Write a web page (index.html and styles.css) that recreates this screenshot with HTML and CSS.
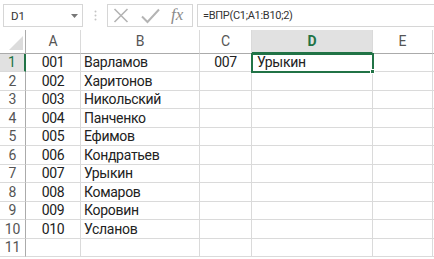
FILE: index.html
```html
<!DOCTYPE html>
<html>
<head>
<meta charset="utf-8">
<link rel="stylesheet" href="styles.css">
</head>
<body>
<div class="app">
  <div class="toolbar">
    <div class="namebox">
      <span class="name">D1</span>
      <svg class="drop" width="7" height="4" viewBox="0 0 7 4"><path d="M0 0H7L3.5 4Z" fill="#777"/></svg>
    </div>
    <div class="sep">
      <svg width="3" height="11" viewBox="0 0 3 11"><circle cx="1.5" cy="1.5" r="1" fill="#c4c4c4"/><circle cx="1.5" cy="5.5" r="1" fill="#c4c4c4"/><circle cx="1.5" cy="9.5" r="1" fill="#c4c4c4"/></svg>
    </div>
    <div class="fxbox">
      <svg class="ico-x" width="16" height="15" viewBox="0 0 16 15"><path d="M1.5 1L14.5 14M14.5 1L1.5 14" stroke="#b4b4b4" stroke-width="1.6" fill="none"/></svg>
      <svg class="ico-ok" width="19" height="16" viewBox="0 0 19 16"><path d="M1 8.5L6.5 14L18 1.5" stroke="#b4b4b4" stroke-width="2" fill="none"/></svg>
      <span class="fx">fx</span>
    </div>
    <div class="formula">=ВПР(С1;А1:В10;2)</div>
  </div>
  <div class="sheet">
    <div class="corner"><svg width="14" height="14" viewBox="0 0 14 14"><path d="M14 0V14H0Z" fill="#dcdcdc"/></svg></div>
    <div class="ch">A</div><div class="ch">B</div><div class="ch">C</div><div class="ch ch-sel">D</div><div class="ch">E</div><div class="ch last"></div>

    <div class="rh rh-sel">1</div><div class="c ca">001</div><div class="c cb">Варламов</div><div class="c ca">007</div><div class="c cb sel">Урыкин<span class="handle"></span></div><div class="c"></div><div class="c last"></div>
    <div class="rh">2</div><div class="c ca">002</div><div class="c cb">Харитонов</div><div class="c"></div><div class="c"></div><div class="c"></div><div class="c last"></div>
    <div class="rh">3</div><div class="c ca">003</div><div class="c cb">Никольский</div><div class="c"></div><div class="c"></div><div class="c"></div><div class="c last"></div>
    <div class="rh">4</div><div class="c ca">004</div><div class="c cb">Панченко</div><div class="c"></div><div class="c"></div><div class="c"></div><div class="c last"></div>
    <div class="rh">5</div><div class="c ca">005</div><div class="c cb">Ефимов</div><div class="c"></div><div class="c"></div><div class="c"></div><div class="c last"></div>
    <div class="rh">6</div><div class="c ca">006</div><div class="c cb">Кондратьев</div><div class="c"></div><div class="c"></div><div class="c"></div><div class="c last"></div>
    <div class="rh">7</div><div class="c ca">007</div><div class="c cb">Урыкин</div><div class="c"></div><div class="c"></div><div class="c"></div><div class="c last"></div>
    <div class="rh">8</div><div class="c ca">008</div><div class="c cb">Комаров</div><div class="c"></div><div class="c"></div><div class="c"></div><div class="c last"></div>
    <div class="rh">9</div><div class="c ca">009</div><div class="c cb">Коровин</div><div class="c"></div><div class="c"></div><div class="c"></div><div class="c last"></div>
    <div class="rh">10</div><div class="c ca">010</div><div class="c cb">Усланов</div><div class="c"></div><div class="c"></div><div class="c"></div><div class="c last"></div>
    <div class="rh">11</div><div class="c"></div><div class="c"></div><div class="c"></div><div class="c"></div><div class="c"></div><div class="c last"></div>
  </div>
</div>
</body>
</html>
```
FILE: styles.css
```css
* { box-sizing: border-box; }
html, body { margin: 0; padding: 0; background: #fff; }
body { width: 434px; height: 259px; overflow: hidden; font-family: Roboto, "Noto Sans", sans-serif; }

.app { display: flex; flex-direction: column; }

.toolbar {
  height: 30px;
  display: flex;
  align-items: flex-start;
  padding-top: 4px;
  padding-left: 3px;
}
.namebox {
  width: 80px; height: 23px;
  border: 1px solid #d6d6d6;
  display: flex; align-items: center; justify-content: space-between;
  padding: 0 4px 0 7px;
  font-size: 11.5px; color: #333;
}
.sep { width: 24px; height: 23px; display: flex; align-items: center; justify-content: center; }
.fxbox {
  width: 86px; height: 23px;
  border: 1px solid #d6d6d6;
  display: flex; align-items: center;
  padding-left: 5px;
}
.ico-x { margin-right: 12px; }
.ico-ok { margin-right: 11px; }
.fx {
  font-family: "Liberation Serif", "DejaVu Serif", serif;
  font-style: italic; font-size: 17px; color: #8a8a8a; line-height: 1;
  margin-top: -2px;
}
.formula {
  flex: 1; height: 23px;
  margin-left: 4px;
  border: 1px solid #d6d6d6; border-right: none;
  display: flex; align-items: center;
  padding-left: 5px;
  font-size: 11px; letter-spacing: -0.3px; color: #333;
}

.sheet {
  display: grid;
  grid-template-columns: 26px 55px 119px 52px 121px 60px 20px;
  grid-template-rows: 23.5px repeat(11, 18.5px);
  font-size: 14px;
  color: #222;
}
.corner {
  border-right: 1px solid #ababab; border-bottom: 1px solid #ababab;
  display: flex; align-items: flex-end; justify-content: flex-end;
  padding: 0 2px 3px 0;
}
.ch {
  border-right: 1px solid #dadada; border-bottom: 1px solid #ababab;
  display: flex; align-items: center; justify-content: center;
  color: #555; font-size: 14px;
}
.ch-sel { background: #e1e1e1; color: #217346; font-weight: 700; border-bottom: 2px solid #217346; }
.rh {
  border-right: 1px solid #ababab; border-bottom: 1px solid #dadada;
  display: flex; align-items: center; justify-content: center;
  color: #555; font-size: 14px;
}
.rh-sel { background: #e1e1e1; color: #217346; border-right: 2px solid #217346; }
.c {
  border-right: 1px solid #dadada; border-bottom: 1px solid #dadada;
  display: flex; align-items: center;
  white-space: nowrap; overflow: visible;
  line-height: 1;
  letter-spacing: -0.3px;
}
.ca { justify-content: center; }
.cb { padding-left: 3px; }
.last { border-right: none; }
.sel {
  position: relative;
  outline: 2px solid #217346; outline-offset: -1px;
  padding-left: 5px;
}
.handle {
  position: absolute; right: -3px; bottom: -3px;
  width: 5px; height: 5px; background: #217346; border: 1px solid #fff;
}
```
